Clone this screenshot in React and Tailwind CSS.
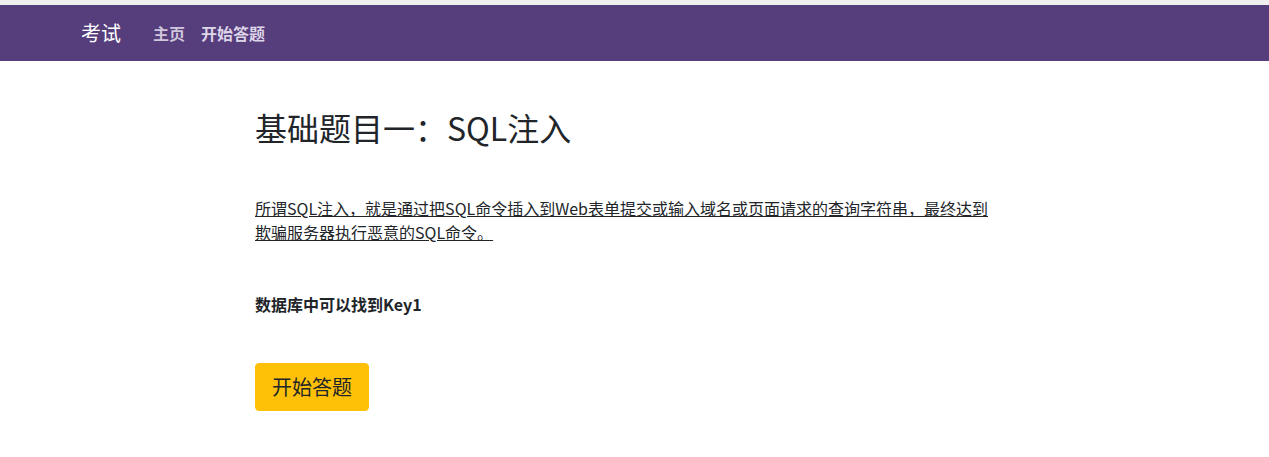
export default function App() {
  const font = { fontFamily: '"Noto Sans CJK SC", "Noto Sans", sans-serif' };
  return (
    <div className="min-h-[457px] bg-white text-[#212529]" style={font}>
      <div className="h-[5px] bg-[#efefef]" />
      <nav className="h-[56px] bg-[#563d7c] flex items-center pl-[81px]">
        <span className="text-[20px] leading-[30px] font-normal text-white mr-[32px]">考试</span>
        <a className="text-[16px] leading-[24px] font-bold text-[#cfc6dc] mr-[16px]">主页</a>
        <a className="text-[16px] leading-[24px] font-bold text-[#ddd5e8]">开始答题</a>
      </nav>
      <main className="pl-[255px] pt-[46px]">
        <h2 className="text-[32px] leading-[40px] font-normal m-0">基础题目一：SQL注入</h2>
        <p className="mt-[49px] w-[735px] text-[16px] leading-[24px] underline">
          所谓SQL注入，就是通过把SQL命令插入到Web表单提交或输入域名或页面请求的查询字符串，最终达到欺骗服务器执行恶意的SQL命令。
        </p>
        <p className="mt-[48px] text-[16px] leading-[24px] font-bold">数据库中可以找到Key1</p>
        <button className="mt-[47px] bg-[#ffc107] border border-[#ffc107] rounded-[4px] px-[16px] py-[8px] text-[20px] leading-[30px] text-[#212529]">
          开始答题
        </button>
      </main>
    </div>
  );
}
